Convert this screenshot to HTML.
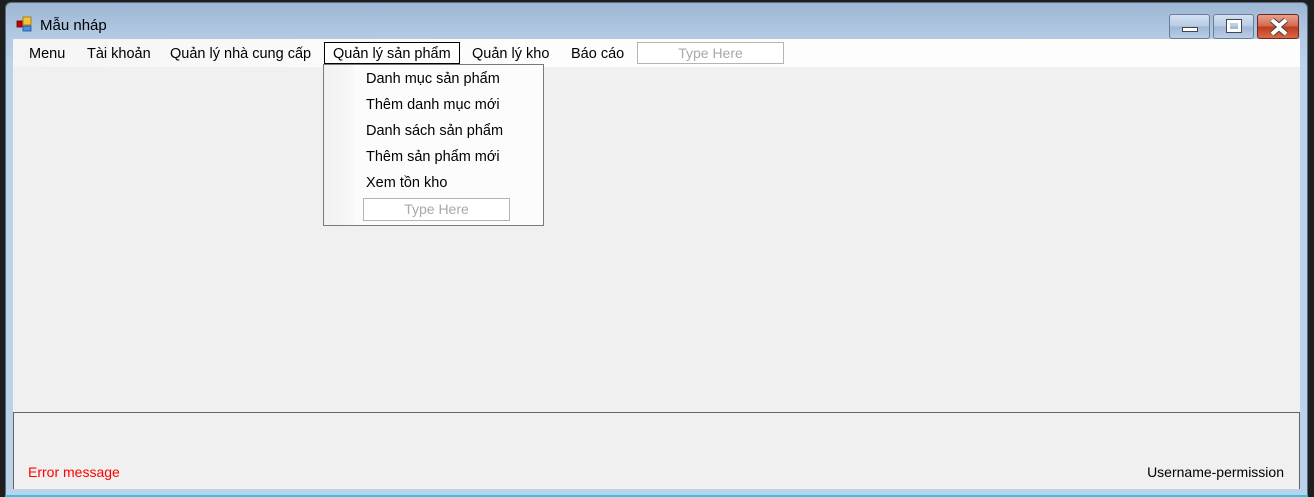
<!DOCTYPE html>
<html><head><meta charset="utf-8"><style>
*{margin:0;padding:0;box-sizing:border-box}
body{width:1314px;height:497px;background:#1e1e1e;position:relative;overflow:hidden;font-family:"Liberation Sans","DejaVu Sans",sans-serif;font-size:14px;color:#000}
.win{position:absolute;left:5px;top:2px;width:1303px;height:495px;background:linear-gradient(#9db6d3 0px,#b1c8e2 30px,#bcd1ea 60px,#bcd1ea 100%);border-radius:6px 6px 0 0;border:1px solid #5a6a80;border-bottom:none}
.title{position:absolute;left:34px;top:14px;font-size:15px;color:#000}
.client{position:absolute;left:13px;top:39px;width:1287px;height:450px;background:#f0f0f0}
.menu{position:absolute;left:0;top:0;width:1287px;height:28px;background:linear-gradient(90deg,#f5f5f5,#fdfdfd 40%,#fdfdfd)}
.mi{position:absolute;top:7px;font-size:14.5px;white-space:nowrap}
.th{position:absolute;border:1px solid #b4b4b4;background:#fff;color:#a8a8a8;text-align:center;font-size:14px}
.dd{position:absolute;left:323px;top:64px;width:221px;height:162px;background:#fcfcfc;border:1px solid #7a7a7a}
.dd .strip{position:absolute;left:0;top:0;width:30px;height:100%;background:linear-gradient(90deg,#f1f1f1,#f8f8f8)}
.di{position:absolute;left:42px;font-size:14.5px;white-space:nowrap}
.panel{position:absolute;left:13px;top:412px;width:1287px;height:77px;border-left:1px solid #646464;border-top:1px solid #646464;border-right:1px solid #646464;background:#f0f0f0}
.btn{position:absolute;top:11px;height:25px;border:1px solid #6b7d95;border-radius:3px;background:linear-gradient(#d3e1f1,#b6cbe4 50%,#9fb7d5 51%,#b9cde5)}
</style></head><body>
<div class="win">
<svg style="position:absolute;left:10px;top:13px" width="18" height="16"><rect x="1" y="5" width="5" height="6" fill="#c00" stroke="#600" stroke-width=".8"/><rect x="7" y="1" width="8" height="8" fill="#f4c430" stroke="#a07000" stroke-width=".8"/><rect x="7" y="10" width="8" height="5" fill="#4a90e2" stroke="#2050a0" stroke-width=".8"/></svg>
<div class="title">Mẫu nháp</div>
<div class="btn" style="left:1163px;width:41px"><div style="position:absolute;left:12px;top:12px;width:16px;height:5px;background:#fff;border:1px solid #445"></div></div>
<div class="btn" style="left:1207px;width:41px"><div style="position:absolute;left:13px;top:5px;width:14px;height:12px;border:3px solid #fff;outline:1px solid #445"></div></div>
<div class="btn" style="left:1251px;width:42px;border-color:#6b2a20;background:linear-gradient(#e9a08c,#d0674e 50%,#c0391c 51%,#d86a48)">
<svg style="position:absolute;left:11px;top:3px" width="20" height="18"><path d="M3 2 L10 8 L17 2 M3 16 L10 10 L17 16" stroke="#444" stroke-width="6" fill="none"/><path d="M3 2 L10 8 L17 2 M3 16 L10 10 L17 16" stroke="#fff" stroke-width="4" fill="none"/></svg></div>
</div>
<div class="client">
<div class="menu">
<span class="mi" style="left:16px">Menu</span>
<span class="mi" style="left:74px">Tài khoản</span>
<span class="mi" style="left:157px">Quản lý nhà cung cấp</span>
<div style="position:absolute;left:311px;top:3px;width:136px;height:22px;border:1px solid #000;background:#fff"></div>
<span class="mi" style="left:320px">Quản lý sản phẩm</span>
<span class="mi" style="left:459px">Quản lý kho</span>
<span class="mi" style="left:558px">Báo cáo</span>
<div class="th" style="left:624px;top:3px;width:147px;height:22px;line-height:20px">Type Here</div>
</div>
</div>
<div class="dd"><div class="strip"></div>
<span class="di" style="top:6px">Danh mục sản phẩm</span>
<span class="di" style="top:32px">Thêm danh mục mới</span>
<span class="di" style="top:58px">Danh sách sản phẩm</span>
<span class="di" style="top:84px">Thêm sản phẩm mới</span>
<span class="di" style="top:110px">Xem tồn kho</span>
<div class="th" style="left:39px;top:133px;width:147px;height:23px;line-height:21px">Type Here</div>
</div>
<div class="panel">
<span style="position:absolute;left:14px;top:51px;color:#f00;font-size:14px">Error message</span>
<span style="position:absolute;right:15px;top:51px;font-size:14px">Username-permission</span>
</div>
<div style="position:absolute;left:5px;top:495px;width:1303px;height:2px;background:#2bc6e0"></div>
</body></html>
